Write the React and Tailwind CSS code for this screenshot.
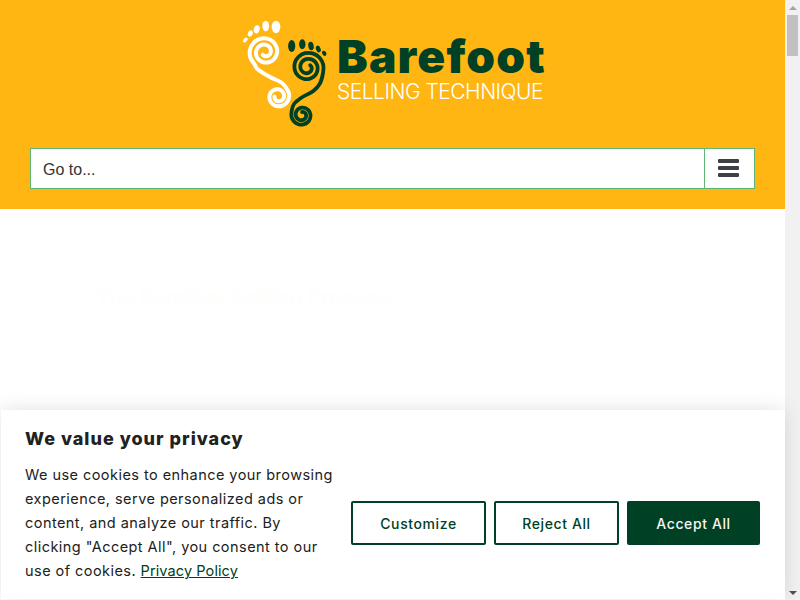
const toCurve = (pts) => {
  let d = `M${pts[0][0]} ${pts[0][1]}`;
  for (let i = 0; i < pts.length - 1; i++) {
    const p0 = pts[i - 1] || pts[i];
    const p1 = pts[i];
    const p2 = pts[i + 1];
    const p3 = pts[i + 2] || p2;
    const c1x = p1[0] + (p2[0] - p0[0]) / 6;
    const c1y = p1[1] + (p2[1] - p0[1]) / 6;
    const c2x = p2[0] - (p3[0] - p1[0]) / 6;
    const c2y = p2[1] - (p3[1] - p1[1]) / 6;
    d += ` C${c1x.toFixed(2)} ${c1y.toFixed(2)} ${c2x.toFixed(2)} ${c2y.toFixed(2)} ${p2[0].toFixed(2)} ${p2[1].toFixed(2)}`;
  }
  return d;
};

// angles in degrees, screen coords (90 = down)
const spiral = (cx, cy, r0, r1, a0, a1) => {
  const pts = [];
  const steps = Math.ceil(Math.abs(a1 - a0) / 30);
  for (let i = 0; i <= steps; i++) {
    const t = i / steps;
    const a = ((a0 + (a1 - a0) * t) * Math.PI) / 180;
    const r = r0 + (r1 - r0) * t;
    pts.push([cx + r * Math.cos(a), cy + r * Math.sin(a)]);
  }
  return pts;
};

const whiteFoot = [
  ...spiral(278, 96.5, 3.5, 11.5, 540, -30),
  [282, 83],
  [270, 77],
  [258, 69.5],
  ...spiral(265, 52, 16.2, 3.5, 130, 850),
];

const greenFoot = [
  ...spiral(302, 115, 3, 11, -450, 200),
  [294, 104],
  [301.7, 97.5],
  [313.3, 91],
  [320, 83.3],
  ...spiral(307.5, 67.5, 16.5, 3.5, 20, -760),
];

const whiteToes = [
  [276, 27, 4.3, 6.2, 0],
  [265.7, 26, 3.4, 5.2, 0],
  [256.7, 29.3, 2.9, 4.2, 15],
  [250.3, 33.5, 2.4, 3.2, 25],
  [245.3, 40, 1.8, 2.8, 45],
];

const greenToes = [
  [291.7, 46, 3.6, 6, 0],
  [302.3, 44.3, 3.2, 5, 0],
  [311, 46, 2.7, 4.2, -10],
  [318.3, 49, 2.3, 3.5, -20],
  [324.3, 53.3, 2, 2.7, -30],
];

const Logo = () => (
  <div className="flex items-start">
    <svg width="95" height="115" viewBox="240 15 95 115" className="shrink-0">
      <path d={toCurve(whiteFoot)} fill="none" stroke="#ffffff" strokeWidth="4" strokeLinecap="round" strokeLinejoin="round" />
      {whiteToes.map(([cx, cy, rx, ry, r]) => (
        <ellipse key={cx} cx={cx} cy={cy} rx={rx} ry={ry} fill="#ffffff" transform={`rotate(${r} ${cx} ${cy})`} />
      ))}
      <path d={toCurve(greenFoot)} fill="none" stroke="#004024" strokeWidth="3.8" strokeLinecap="round" strokeLinejoin="round" />
      {greenToes.map(([cx, cy, rx, ry, r]) => (
        <ellipse key={cx} cx={cx} cy={cy} rx={rx} ry={ry} fill="#004024" transform={`rotate(${r} ${cx} ${cy})`} />
      ))}
    </svg>
    <div className="ml-[2px] mt-[18px] w-[206px] flex flex-col font-['Inter',sans-serif]">
      <span className="text-[46px] leading-[47px] font-black tracking-[1.2px] text-[#004024] whitespace-nowrap">Barefoot</span>
      <span className="text-[21px] leading-[24px] font-light tracking-[-0.5px] text-white whitespace-nowrap">SELLING TECHNIQUE</span>
    </div>
  </div>
);

const Scrollbar = () => (
  <aside className="w-[15px] shrink-0 bg-[#f1f1f1] flex flex-col items-center">
    <div className="h-[15px] flex items-center justify-center">
      <div className="w-0 h-0 border-x-[4px] border-x-transparent border-b-[4px] border-b-[#a3a3a3]" />
    </div>
    <div className="w-[11px] h-[41px] bg-[#c1c1c1]" />
    <div className="flex-1" />
    <div className="h-[15px] flex items-center justify-center">
      <div className="w-0 h-0 border-x-[4px] border-x-transparent border-t-[4px] border-t-[#505050]" />
    </div>
  </aside>
);

export default function App() {
  return (
    <div className="w-[800px] h-[600px] flex overflow-hidden bg-white">
      <main className="relative flex-1 min-w-0">
        <header className="h-[209px] bg-[#ffb612] flex flex-col">
          <div className="flex justify-center pt-[15px] h-[148px] pr-[2px]">
            <Logo />
          </div>
          <div className="mx-[30px] h-[41px] flex bg-white border border-[#5fb672]">
            <div className="flex-1 flex items-center pl-3 pt-[2px] font-['Liberation_Sans',sans-serif] text-base text-[#333333]">Go to...</div>
            <div className="w-[50px] border-l border-[#5fb672] pr-[2px] pb-[1px] flex flex-col items-center justify-center gap-[3px]">
              <span className="w-[21px] h-[4px] rounded-[1px] bg-[#3f3f46]" />
              <span className="w-[21px] h-[4px] rounded-[1px] bg-[#3f3f46]" />
              <span className="w-[21px] h-[4px] rounded-[1px] bg-[#3f3f46]" />
            </div>
          </div>
        </header>

        <h1 className="mt-[73px] pl-[95px] text-[21px] leading-[32px] font-bold text-[#fffefc] whitespace-nowrap font-['Inter',sans-serif]">
          The Barefoot Selling Process
        </h1>

        <section className="absolute left-[1px] right-0 bottom-[1px] h-[189px] bg-white shadow-[0_0_18px_rgba(0,0,0,0.12)] pl-6 pr-[25px] flex items-start font-['Inter',sans-serif]">
          <div className="w-[312px] shrink-0 pt-[17px]">
            <h2 className="text-[18px] leading-[24px] font-extrabold tracking-[1px] whitespace-nowrap text-[#212121]">We value your privacy</h2>
            <p className="mt-[12px] text-[14.5px] leading-[24px] tracking-[0.45px] text-[#212121]">
              We use cookies to enhance your browsing experience, serve personalized ads or content, and analyze our traffic. By clicking "Accept All", you consent to our use of cookies.{" "}
              <a href="#" className="tracking-[0.1px] text-[#004024] underline">Privacy Policy</a>
            </p>
          </div>
          <div className="ml-auto mt-[91px] flex gap-2 text-[14px] font-medium tracking-[0.6px]">
            <button className="w-[135px] h-[44px] rounded-[2px] border-2 border-[#004024] text-[#004024]">Customize</button>
            <button className="w-[125px] h-[44px] rounded-[2px] border-2 border-[#004024] text-[#004024]">Reject All</button>
            <button className="w-[133px] h-[44px] rounded-[2px] bg-[#004024] text-[#f4f4f4]">Accept All</button>
          </div>
        </section>
      </main>
      <Scrollbar />
    </div>
  );
}
